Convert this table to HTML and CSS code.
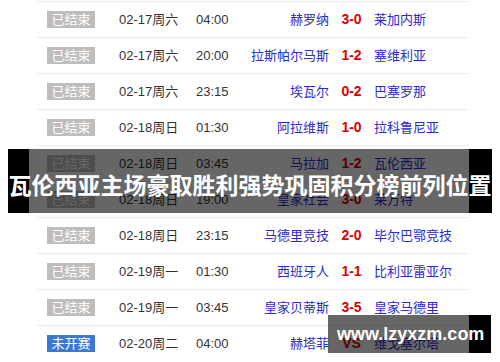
FILE: index.html
```html
<!DOCTYPE html>
<html lang="zh-CN">
<head>
<meta charset="utf-8">
<title>瓦伦西亚主场豪取胜利强势巩固积分榜前列位置</title>
<link rel="stylesheet" href="styles.css">
</head>
<body>
<div class="page">
  <div class="list">
    <div class="row"><span class="cell"><span class="badge">已结束</span></span><span class="date">02-17周六</span><span class="time">04:00</span><span class="home">赫罗纳</span><span class="score">3-0</span><span class="away">莱加内斯</span></div>
    <div class="row"><span class="cell"><span class="badge">已结束</span></span><span class="date">02-17周六</span><span class="time">20:00</span><span class="home">拉斯帕尔马斯</span><span class="score">1-2</span><span class="away">塞维利亚</span></div>
    <div class="row"><span class="cell"><span class="badge">已结束</span></span><span class="date">02-17周六</span><span class="time">23:15</span><span class="home">埃瓦尔</span><span class="score">0-2</span><span class="away">巴塞罗那</span></div>
    <div class="row"><span class="cell"><span class="badge">已结束</span></span><span class="date">02-18周日</span><span class="time">01:30</span><span class="home">阿拉维斯</span><span class="score">1-0</span><span class="away">拉科鲁尼亚</span></div>
    <div class="row"><span class="cell"><span class="badge">已结束</span></span><span class="date">02-18周日</span><span class="time">03:45</span><span class="home">马拉加</span><span class="score">1-2</span><span class="away">瓦伦西亚</span></div>
    <div class="row"><span class="cell"><span class="badge">已结束</span></span><span class="date">02-18周日</span><span class="time">19:00</span><span class="home">皇家社会</span><span class="score">3-0</span><span class="away">莱万特</span></div>
    <div class="row"><span class="cell"><span class="badge">已结束</span></span><span class="date">02-18周日</span><span class="time">23:15</span><span class="home">马德里竞技</span><span class="score">2-0</span><span class="away">毕尔巴鄂竞技</span></div>
    <div class="row"><span class="cell"><span class="badge">已结束</span></span><span class="date">02-19周一</span><span class="time">01:30</span><span class="home">西班牙人</span><span class="score">1-1</span><span class="away">比利亚雷亚尔</span></div>
    <div class="row"><span class="cell"><span class="badge">已结束</span></span><span class="date">02-19周一</span><span class="time">03:45</span><span class="home">皇家贝蒂斯</span><span class="score">3-5</span><span class="away">皇家马德里</span></div>
    <div class="row"><span class="cell"><span class="badge badge-upcoming">未开赛</span></span><span class="date">02-20周二</span><span class="time">04:00</span><span class="home">赫塔菲</span><span class="score">VS</span><span class="away">维戈塞尔塔</span></div>
  </div>
  <div class="title-band"><h1 class="title">瓦伦西亚主场豪取胜利强势巩固积分榜前列位置</h1></div>
  <div class="watermark">www.lzyxzm.com</div>
</div>
</body>
</html>
```
FILE: styles.css
```css
html, body {
  margin: 0;
  padding: 0;
  background: #fff;
}
body {
  font-family: "Liberation Sans", Arial, "Noto Sans CJK SC", sans-serif;
  width: 500px;
  height: 362px;
  overflow: hidden;
}
.page {
  position: relative;
  width: 500px;
  height: 362px;
}
.list {
  padding-top: 1px;
  margin-left: 37px;
  width: 432px;
}
.row {
  display: grid;
  grid-template-columns: 72px 77px 45px 88px 45px 1fr;
  align-items: center;
  height: 35px;
  border-top: 1px solid #ececec;
  padding-left: 10px;
  font-size: 13px;
  line-height: 17px;
  color: #333;
  white-space: nowrap;
}
.badge {
  display: inline-block;
  width: 48px;
  height: 17px;
  line-height: 17px;
  text-align: center;
  background: #bdbdbd;
  color: #fff;
  font-size: 13px;
}
.badge-upcoming {
  background: #3a78d4;
}
.cell { display: block; height: 17px; }
.date, .time { color: #333; }
.home {
  text-align: right;
  color: #2b2bd0;
}
.away {
  color: #2b2bd0;
}
.score {
  text-align: center;
  color: #d90000;
  font-weight: bold;
  font-size: 14px;
}
.title-band {
  position: absolute;
  left: 8px;
  top: 149px;
  width: 484px;
  height: 64px;
  background: linear-gradient(to right, #000 0, #000 21px, rgba(0,0,0,0.6) 21px, rgba(0,0,0,0.6) 461px, #000 461px, #000 484px);
  display: flex;
  align-items: center;
  justify-content: center;
}
.title {
  margin: 6px 0 0 0;
  font-family: "Noto Sans CJK SC", sans-serif;
  font-size: 23px;
  line-height: 30px;
  font-weight: bold;
  color: #fff;
  white-space: nowrap;
  letter-spacing: 0;
}
.watermark {
  position: absolute;
  left: 328px;
  top: 315px;
  width: 154px;
  height: 38px;
  padding-left: 9px;
  background: linear-gradient(to right, rgba(0,0,0,0.6) 0, rgba(0,0,0,0.6) 141px, #000 141px, #000 163px);
  color: #fff;
  font-family: "Liberation Sans", Arial, sans-serif;
  font-weight: bold;
  font-size: 18px;
  line-height: 38px;
}
```
